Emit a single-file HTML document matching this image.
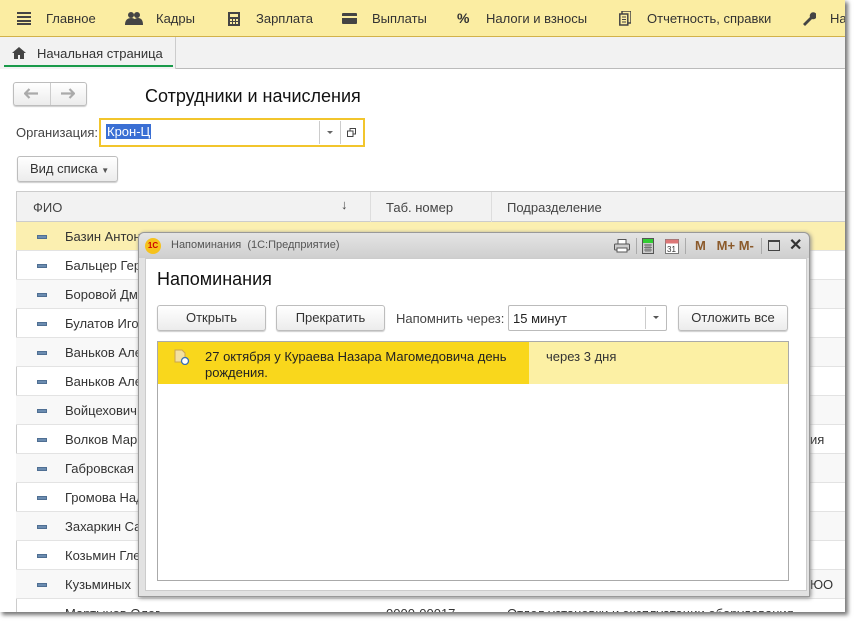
<!DOCTYPE html>
<html><head><meta charset="utf-8"><style>
*{margin:0;padding:0;box-sizing:border-box}
body{width:858px;height:626px;overflow:hidden;background:#fff;font-family:"Liberation Sans",sans-serif;font-size:13px;color:#333;position:relative}
.abs{position:absolute}
#app{position:absolute;left:-1px;top:-1px;width:846px;height:613px;background:#fff;border-left:1px solid #222;border-top:1px solid #222;overflow:hidden;box-shadow:3px 3px 4px #777}
.top{position:absolute;left:0;top:0;width:845px;height:37px;background:#fbeda2;border-bottom:1px solid #d2b24a}
.top span{position:absolute;top:11px;font-size:13px;color:#333}
.tabs{position:absolute;left:0;top:37px;width:845px;height:32px;background:#f2f2f2;border-bottom:1px solid #bbb}
.btn{position:absolute;background:linear-gradient(#fff,#ececec);border:1px solid #bdbdbd;border-radius:3px;box-shadow:0 1px 1px #ccc;text-align:center;font-size:13px;color:#333}
.row{position:absolute;left:16px;width:830px;height:29px;border-bottom:1px solid #e3e3e3}
.row i{position:absolute;left:21px;top:13px;width:10px;height:4px;background:#6b8cb0;border:1px solid #4f6f93}
.row b{position:absolute;left:49px;top:7px;font-weight:normal;font-size:13px;color:#333}
</style></head><body>
<div id="app">
<div class="top">
 <svg class="abs" style="left:17px;top:12px" width="14" height="13"><rect y="0" width="14" height="2" fill="#444"/><rect y="4" width="14" height="2" fill="#444"/><rect y="8" width="14" height="2" fill="#444"/><rect y="11" width="14" height="2" fill="#444"/></svg>
 <span style="left:46px">Главное</span>
 <svg class="abs" style="left:125px;top:11px" width="18" height="14"><circle cx="6" cy="4" r="3" fill="#444"/><circle cx="12" cy="4" r="3" fill="#444"/><path d="M0 14q0-7 6-7t6 7zM8 14q0-7 5-7t5 7z" fill="#444"/></svg>
 <span style="left:156px">Кадры</span>
 <svg class="abs" style="left:228px;top:12px" width="12" height="14"><rect width="12" height="14" fill="#444"/><rect x="2" y="2" width="8" height="3" fill="#fbeda2"/><g fill="#fbeda2"><rect x="2" y="7" width="2" height="2"/><rect x="5" y="7" width="2" height="2"/><rect x="8" y="7" width="2" height="2"/><rect x="2" y="10" width="2" height="2"/><rect x="5" y="10" width="2" height="2"/><rect x="8" y="10" width="2" height="2"/></g></svg>
 <span style="left:256px">Зарплата</span>
 <svg class="abs" style="left:342px;top:13px" width="15" height="11"><rect width="15" height="11" rx="1" fill="#444"/><rect x="0" y="3" width="15" height="2" fill="#fbeda2"/></svg>
 <span style="left:372px">Выплаты</span>
 <span style="left:457px;font-weight:bold;font-size:14px;top:10px">%</span>
 <span style="left:486px">Налоги и взносы</span>
 <svg class="abs" style="left:619px;top:11px" width="12" height="15"><rect x="3" y="0" width="9" height="12" fill="none" stroke="#444" stroke-width="1.5"/><rect x="0.8" y="3" width="8" height="11" fill="#fbeda2" stroke="#444" stroke-width="1.5"/><path d="M3 6h4M3 8.5h4M3 11h4" stroke="#444"/></svg>
 <span style="left:647px">Отчетность, справки</span>
 <svg class="abs" style="left:801px;top:11px" width="15" height="15"><path d="M2 13L9 6a3.5 3.5 0 1 1 2 2L4 15z" fill="#444"/></svg>
 <span style="left:830px">На</span>
</div>
<div class="tabs">
 <div class="abs" style="left:0;top:0;width:176px;height:32px;border-right:1px solid #ccc;background:#f2f2f2"></div>
 <svg class="abs" style="left:12px;top:10px" width="14" height="12"><path d="M7 0L0 6h2v6h4V8h2v4h4V6h2z" fill="#444"/></svg>
 <span class="abs" style="left:37px;top:9px">Начальная страница</span>
 <div class="abs" style="left:4px;top:28px;width:169px;height:2px;background:#1a9a4a"></div>
</div>
<div class="btn" style="left:13px;top:82px;width:74px;height:24px"></div>
<div class="abs" style="left:50px;top:83px;width:1px;height:22px;background:#ccc"></div>
<svg class="abs" style="left:24px;top:88px" width="15" height="11"><path d="M1 5.5h13M5.5 1L1 5.5 5.5 10" fill="none" stroke="#aaa" stroke-width="2.2"/></svg>
<svg class="abs" style="left:60px;top:88px" width="15" height="11"><path d="M1 5.5h13M9.5 1L14 5.5 9.5 10" fill="none" stroke="#aaa" stroke-width="2.2"/></svg>
<span class="abs" style="left:145px;top:86px;font-size:18px;color:#111">Сотрудники и начисления</span>
<span class="abs" style="left:16px;top:125px;color:#444">Организация:</span>
<div class="abs" style="left:99px;top:118px;width:266px;height:29px;border:2px solid #f2c52c;background:#fff"></div>
<span class="abs" style="left:106px;top:124px;background:#3a6fd4;color:#fff;padding:0 1px">Крон-Ц</span>
<div class="abs" style="left:319px;top:121px;width:1px;height:23px;background:#ccc"></div>
<div class="abs" style="left:340px;top:121px;width:1px;height:23px;background:#ccc"></div>
<div class="abs" style="left:327px;top:131px;border:3px solid transparent;border-top:3px solid #666"></div>
<svg class="abs" style="left:347px;top:128px" width="9" height="9"><rect x="3" y="0.5" width="5.5" height="5.5" fill="none" stroke="#444"/><rect x="0.5" y="3" width="5.5" height="5.5" fill="#fff" stroke="#444"/></svg>
<div class="btn" style="left:17px;top:156px;width:101px;height:26px;line-height:24px;text-align:left;padding-left:12px">Вид списка <span style="font-size:8px;color:#555">▼</span></div>
<div class="abs" style="left:16px;top:191px;width:830px;height:31px;background:#f2f2f2;border:1px solid #ccc;border-right:none"></div>
<div class="abs" style="left:370px;top:192px;width:1px;height:30px;background:#ddd"></div>
<div class="abs" style="left:491px;top:192px;width:1px;height:30px;background:#ddd"></div>
<span class="abs" style="left:33px;top:200px;color:#444">ФИО</span>
<span class="abs" style="left:341px;top:197px;color:#444">↓</span>
<span class="abs" style="left:386px;top:200px;color:#444">Таб. номер</span>
<span class="abs" style="left:507px;top:200px;color:#444">Подразделение</span>
<div class="abs" style="left:16px;top:222px;width:1px;height:400px;background:#ccc"></div>
<div class="row" style="top:222px;background:#fbefb0"><i></i><b>Базин Антон П</b></div>
<div class="row" style="top:251px"><i></i><b>Бальцер Гер</b></div>
<div class="row" style="top:280px;background:#f8f8f8"><i></i><b>Боровой Дм</b></div>
<div class="row" style="top:309px"><i></i><b>Булатов Иго</b></div>
<div class="row" style="top:338px;background:#f8f8f8"><i></i><b>Ваньков Але</b></div>
<div class="row" style="top:367px"><i></i><b>Ваньков Але</b></div>
<div class="row" style="top:396px;background:#f8f8f8"><i></i><b>Войцехович</b></div>
<div class="row" style="top:425px"><i></i><b>Волков Мар</b><b style="left:794px">ия</b></div>
<div class="row" style="top:454px;background:#f8f8f8"><i></i><b>Габровская</b></div>
<div class="row" style="top:483px"><i></i><b>Громова Над</b></div>
<div class="row" style="top:512px;background:#f8f8f8"><i></i><b>Захаркин Са</b></div>
<div class="row" style="top:541px"><i></i><b>Козьмин Гле</b></div>
<div class="row" style="top:570px;background:#f8f8f8"><i></i><b>Кузьминых</b><b style="left:794px">ЮО</b></div>
<div class="row" style="top:599px"><i></i><b>Мартынов Олег</b><b style="left:370px">0000-00017</b><b style="left:491px">Отдел установки и эксплуатации оборудования</b></div>

<!-- dialog -->
<div class="abs" style="left:138px;top:232px;width:672px;height:365px;background:#e2e2e2;border:1px solid #999;border-radius:6px 6px 0 0;box-shadow:1px 1px 4px #888"></div>
<div class="abs" style="left:139px;top:233px;width:670px;height:25px;background:linear-gradient(#e4e4e4,#cfcfcf);border-radius:6px 6px 0 0"></div>
<div class="abs" style="left:145px;top:238px;width:16px;height:16px;border-radius:50%;background:#f6c21c;color:#c00;font-size:8px;font-weight:bold;text-align:center;line-height:16px">1С</div>
<span class="abs" style="left:171px;top:239px;font-size:11px;color:#555">Напоминания &nbsp;(1С:Предприятие)</span>
<svg class="abs" style="left:614px;top:239px" width="16" height="14"><rect x="4" y="0.5" width="8" height="5" fill="#fff" stroke="#555"/><rect x="0.5" y="5" width="15" height="6" rx="1" fill="#ccc" stroke="#555"/><rect x="3" y="9" width="10" height="4" fill="#fff" stroke="#555"/></svg>
<div class="abs" style="left:636px;top:238px;width:1px;height:16px;background:#aaa"></div>
<svg class="abs" style="left:642px;top:238px" width="12" height="16"><rect x="0.5" y="0.5" width="11" height="15" fill="#ccc" stroke="#555"/><rect x="1" y="1" width="10" height="4" fill="#3c3"/><path d="M2 7h8M2 9.5h8M2 12h8M4 6v8M6 6v8M8 6v8" stroke="#666" stroke-width=".8"/></svg>
<svg class="abs" style="left:665px;top:237px" width="14" height="17"><rect x="0.5" y="2.5" width="13" height="14" fill="#fff" stroke="#777"/><rect x="0.5" y="2.5" width="13" height="4" fill="#d77"/><text x="2" y="15" font-size="8" font-family="Liberation Sans" fill="#333">31</text></svg>
<div class="abs" style="left:685px;top:238px;width:1px;height:16px;background:#aaa"></div>
<span class="abs" style="left:695px;top:238px;font-weight:bold;color:#8b5a2b;font-size:13px">M&nbsp;&nbsp; M+ M-</span>
<div class="abs" style="left:761px;top:238px;width:1px;height:16px;background:#aaa"></div>
<div class="abs" style="left:768px;top:240px;width:12px;height:11px;border:1.5px solid #444;border-top-width:2px"></div>
<span class="abs" style="left:789px;top:235px;font-size:16px;color:#333;font-weight:bold">✕</span>
<div class="abs" style="left:145px;top:258px;width:662px;height:333px;background:#fff;border:1px solid #ccc"></div>
<span class="abs" style="left:157px;top:269px;font-size:18px;color:#111">Напоминания</span>
<div class="btn" style="left:157px;top:305px;width:109px;height:26px;line-height:24px">Открыть</div>
<div class="btn" style="left:276px;top:305px;width:109px;height:26px;line-height:24px">Прекратить</div>
<span class="abs" style="left:396px;top:311px;color:#444">Напомнить через:</span>
<div class="abs" style="left:508px;top:305px;width:159px;height:26px;border:1px solid #bbb;border-radius:2px;background:#fff"></div>
<span class="abs" style="left:513px;top:311px;color:#222">15 минут</span>
<div class="abs" style="left:645px;top:307px;width:1px;height:22px;background:#ccc"></div>
<div class="abs" style="left:653px;top:316px;border:3px solid transparent;border-top:3px solid #555"></div>
<div class="btn" style="left:678px;top:305px;width:110px;height:26px;line-height:24px">Отложить все</div>
<div class="abs" style="left:157px;top:341px;width:632px;height:240px;border:1px solid #aaa;background:#fff"></div>
<div class="abs" style="left:158px;top:342px;width:371px;height:42px;background:#f9d71c"></div>
<div class="abs" style="left:529px;top:342px;width:259px;height:42px;background:#fcf0a4"></div>
<svg class="abs" style="left:174px;top:349px" width="16" height="16"><path d="M1 1h7l3 3v9H1z" fill="#f3e0a0" stroke="#c9a450"/><circle cx="11" cy="12" r="3.5" fill="#fff" stroke="#3a6fb0" stroke-width="1.3"/></svg>
<span class="abs" style="left:205px;top:349px;color:#222;line-height:16px">27 октября у Кураева Назара Магомедовича день<br>рождения.</span>
<span class="abs" style="left:546px;top:349px;color:#333">через 3 дня</span>
</div>
</body></html>
